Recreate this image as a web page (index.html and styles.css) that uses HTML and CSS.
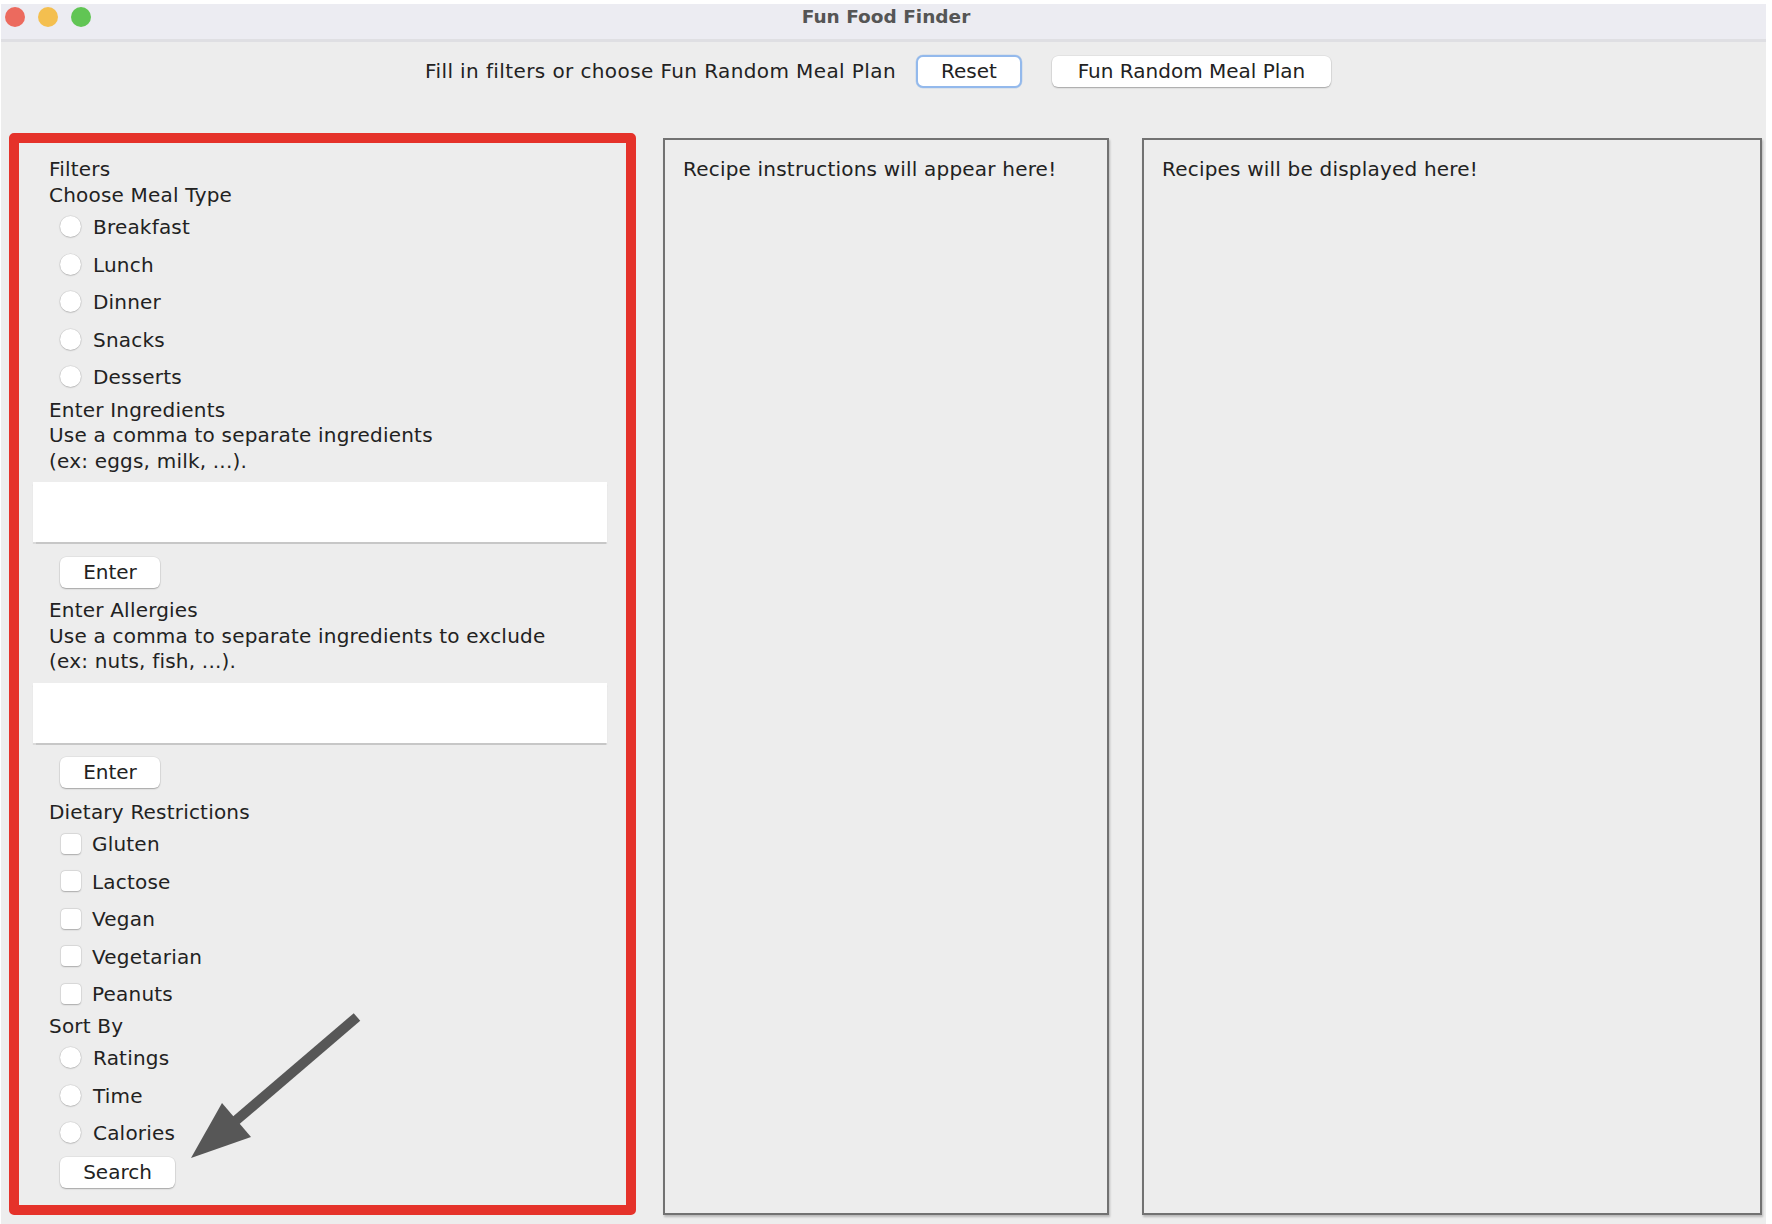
FILE: index.html
```html
<!DOCTYPE html>
<html lang="en">
<head>
<meta charset="utf-8">
<title>Fun Food Finder</title>
<link rel="stylesheet" href="styles.css">
</head>
<body>
<div class="window">
  <div class="titlebar">
    <div class="lights">
      <span class="light red"></span>
      <span class="light yellow"></span>
      <span class="light green"></span>
    </div>
    <div class="title">Fun Food Finder</div>
    <div></div>
  </div>
  <div class="content">
    <div class="toolbar">
      <span class="prompt">Fill in filters or choose Fun Random Meal Plan</span>
      <button class="btn reset">Reset</button>
      <button class="btn random">Fun Random Meal Plan</button>
    </div>
    <div class="panels">
      <div class="filters">
        <div class="label">Filters</div>
        <div class="label">Choose Meal Type</div>
        <div class="opt"><span class="radio"></span><span class="opt-text">Breakfast</span></div>
        <div class="opt"><span class="radio"></span><span class="opt-text">Lunch</span></div>
        <div class="opt"><span class="radio"></span><span class="opt-text">Dinner</span></div>
        <div class="opt"><span class="radio"></span><span class="opt-text">Snacks</span></div>
        <div class="opt"><span class="radio"></span><span class="opt-text">Desserts</span></div>

        <div class="label sec-ingr">Enter Ingredients</div>
        <div class="label">Use a comma to separate ingredients</div>
        <div class="label">(ex: eggs, milk, ...).</div>
        <div class="field"></div>
        <button class="btn small enter1">Enter</button>

        <div class="label sec-allergy">Enter Allergies</div>
        <div class="label">Use a comma to separate ingredients to exclude</div>
        <div class="label">(ex: nuts, fish, ...).</div>
        <div class="field"></div>
        <button class="btn small enter2">Enter</button>

        <div class="label sec-diet">Dietary Restrictions</div>
        <div class="opt"><span class="check"></span><span class="opt-text">Gluten</span></div>
        <div class="opt"><span class="check"></span><span class="opt-text">Lactose</span></div>
        <div class="opt"><span class="check"></span><span class="opt-text">Vegan</span></div>
        <div class="opt"><span class="check"></span><span class="opt-text">Vegetarian</span></div>
        <div class="opt"><span class="check"></span><span class="opt-text">Peanuts</span></div>

        <div class="label sec-sort">Sort By</div>
        <div class="opt"><span class="radio"></span><span class="opt-text">Ratings</span></div>
        <div class="opt"><span class="radio"></span><span class="opt-text">Time</span></div>
        <div class="opt"><span class="radio"></span><span class="opt-text">Calories</span></div>
        <button class="btn small search">Search</button>

        <svg class="arrow" width="607" height="1062" viewBox="0 0 607 1062" aria-hidden="true">
          <line x1="338" y1="874" x2="214" y2="980" stroke="#575757" stroke-width="10"/>
          <polygon points="172,1015 203,960 232,994" fill="#575757"/>
        </svg>
      </div>
      <div class="box instructions">Recipe instructions will appear here!</div>
      <div class="box recipes">Recipes will be displayed here!</div>
    </div>
  </div>
</div>
</body>
</html>
```

FILE: styles.css
```css
* {
  box-sizing: border-box;
}

html, body {
  margin: 0;
  padding: 0;
  background: #ffffff;
}

body {
  font-family: "DejaVu Sans", "Liberation Sans", sans-serif;
  font-size: 20px;
  color: #222222;
}

.window {
  margin: 4px 0 0 1px;
  width: 1765px;
  height: 1220px;
  background: #ededed;
  display: flex;
  flex-direction: column;
}

/* title bar */
.titlebar {
  height: 38px;
  background: #ececf2;
  border-bottom: 3px solid #dfdfe3;
  display: grid;
  grid-template-columns: 1fr auto 1fr;
  align-items: start;
}

.lights {
  display: flex;
  gap: 13px;
  padding: 3px 0 0 4px;
}

.light {
  width: 20px;
  height: 20px;
  border-radius: 50%;
  display: block;
}

.light.red { background: #ec6a5e; }
.light.yellow { background: #f4bf4f; }
.light.green { background: #61c554; }

.title {
  font-weight: bold;
  font-size: 18.5px;
  line-height: 20px;
  padding-top: 3px;
  color: #555555;
  padding-left: 5px;
}

/* content */
.content {
  flex: 1;
  display: flex;
  flex-direction: column;
}

.toolbar {
  display: flex;
  justify-content: center;
  align-items: center;
  padding-top: 12px;
  padding-right: 11px;
  height: 46px;
}

.prompt {
  line-height: 25px;
  margin-right: 20px;
  padding-top: 1px;
  letter-spacing: 0.4px;
}

.btn {
  font-family: "DejaVu Sans", "Liberation Sans", sans-serif;
  font-size: 20px;
  color: #222222;
  background: #ffffff;
  border: none;
  border-radius: 6px;
  box-shadow: 0 1px 1.5px rgba(0, 0, 0, 0.28), 0 0 0 0.5px rgba(0, 0, 0, 0.08);
  padding: 0;
  line-height: 25px;
  display: flex;
  align-items: center;
  justify-content: center;
}

.reset {
  width: 106px;
  height: 33px;
  border: 2px solid #93b9ec;
  border-radius: 7px;
  box-shadow: 0 0 0 0.5px rgba(100, 150, 220, 0.25);
  margin-right: 30px;
}

.random {
  width: 279px;
  height: 31px;
}

.panels {
  display: flex;
  align-items: stretch;
  padding-left: 8px;
  margin-top: 45px;
  height: 1082px;
}

/* filters panel */
.filters {
  position: relative;
  width: 627px;
  border: 10px solid #e5322a;
  border-radius: 5px;
  padding: 14px 0 0 30px;
  display: flex;
  flex-direction: column;
  align-items: flex-start;
}

.label {
  line-height: 25.5px;
  height: 25.5px;
  white-space: nowrap;
  letter-spacing: 0.2px;
}

.opt {
  height: 37.5px;
  display: flex;
  align-items: center;
  padding-left: 11px;
  gap: 12px;
}

.opt-text {
  line-height: 25px;
  padding-top: 2px;
  letter-spacing: 0.2px;
}

.radio {
  width: 21px;
  height: 21px;
  border-radius: 50%;
  background: #ffffff;
  box-shadow: 0 0.5px 1.5px rgba(0, 0, 0, 0.25), 0 0 0 0.5px rgba(0, 0, 0, 0.08);
  flex: none;
}

.check {
  width: 20px;
  height: 20px;
  border-radius: 4px;
  background: #ffffff;
  box-shadow: 0 0.5px 1.5px rgba(0, 0, 0, 0.25), 0 0 0 0.5px rgba(0, 0, 0, 0.08);
  flex: none;
  margin-left: 1px;
  margin-right: -1px;
}

.sec-ingr { margin-top: 2px; }
.sec-allergy { margin-top: 10px; }
.sec-diet { margin-top: 12px; }
.sec-sort { margin-top: 1px; }

.field {
  margin-left: -16px;
  width: 574px;
  height: 60px;
  background: #ffffff;
  box-shadow: 0 1.5px 1px rgba(0, 0, 0, 0.16);
  margin-top: 8px;
}

.btn.small {
  margin-left: 11px;
  width: 100px;
  height: 31px;
}

.enter1 { margin-top: 15px; }
.enter2 { margin-top: 14px; }

.btn.search {
  width: 115px;
  margin-top: 5.5px;
}

.arrow {
  position: absolute;
  left: 0;
  top: 0;
  overflow: visible;
  pointer-events: none;
}

/* output boxes */
.box {
  margin-top: 5px;
  border: 2px solid #727272;
  box-shadow: 1px 2px 2px rgba(0, 0, 0, 0.22);
  padding: 17px 0 0 18px;
  line-height: 25.5px;
  letter-spacing: 0.2px;
}

.instructions {
  margin-left: 27px;
  width: 446px;
}

.recipes {
  margin-left: 33px;
  width: 620px;
}
```
